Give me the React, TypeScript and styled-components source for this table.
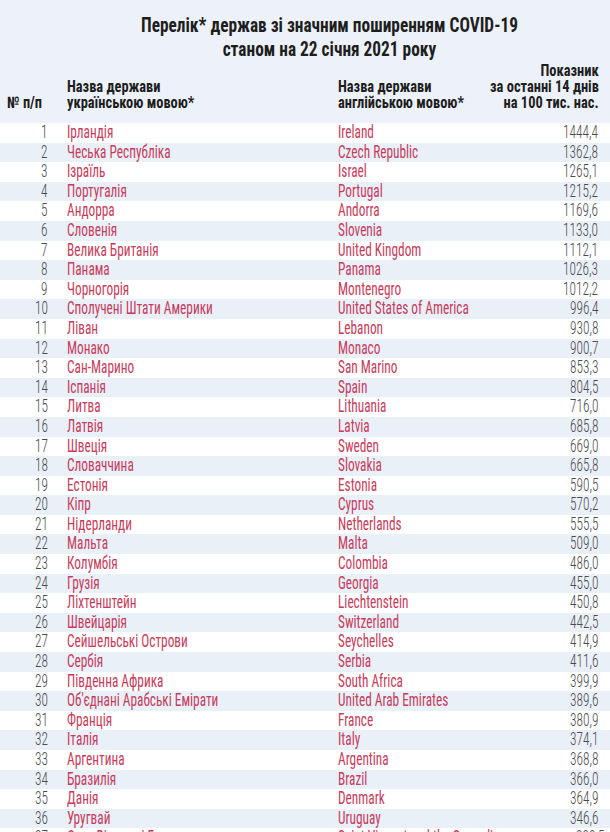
import React from "react";
import styled, { createGlobalStyle } from "styled-components";

const Global = createGlobalStyle`
  html, body { margin: 0; padding: 0; background: #ffffff; }
  body {
    font-family: "Roboto Condensed", "DejaVu Sans Condensed", "Liberation Sans Narrow", Roboto, sans-serif;
    font-stretch: condensed;
    overflow: hidden;
  }
`;

const Page = styled.div`
  width: 610px;
  height: 832px;
  overflow: hidden;
`;

const Head = styled.header`
  background: #edf2fa;
  padding: 13px 12px 12px 0;
`;

const Title = styled.h1`
  margin: 0;
  padding-left: 60px;
  text-align: center;
  font-size: 21px;
  line-height: 24px;
  font-weight: 700;
  color: #1e1e1e;
`;

const Narrow = styled.span<{ $scale: number; $origin?: "left" | "right" | "center" }>`
  display: inline-block;
  white-space: nowrap;
  transform: scaleX(${(p) => p.$scale});
  transform-origin: ${(p) => p.$origin ?? "left"} center;
`;

const Grid = styled.div`
  display: grid;
  grid-template-columns: 48px 290px 1fr auto;
  padding-right: 12px;
`;

const HeadRow = styled(Grid)`
  align-items: end;
  margin-top: 2px;
  font-size: 16px;
  line-height: 16px;
  font-weight: 700;
  color: #1e1e1e;
`;

const HCell = styled.div<{ $right?: boolean; $pad?: boolean }>`
  display: flex;
  flex-direction: column;
  align-items: ${(p) => (p.$right ? "flex-end" : "flex-start")};
  padding-left: ${(p) => (p.$pad ? "19px" : "0")};
`;

const NumHead = styled.div`
  padding-left: 7px;
  white-space: nowrap;
`;

const Row = styled(Grid)<{ $alt: boolean }>`
  height: 19.6px;
  align-items: center;
  background: ${(p) => (p.$alt ? "#eaf0f8" : "#ffffff")};
  font-size: 17.5px;
  line-height: 19.6px;
`;

const Num = styled.div`
  text-align: right;
  color: #4a4a4e;
  font-weight: 300;
`;

const Name = styled.div<{ $pad?: boolean }>`
  color: #c73c5c;
  padding-left: ${(p) => (p.$pad ? "19px" : "0")};
`;

const Val = styled.div`
  text-align: right;
  color: #4a4a4e;
  font-weight: 300;
`;

const data: [string, string, string][] = [
  ["Ірландія", "Ireland", "1444,4"],
  ["Чеська Республіка", "Czech Republic", "1362,8"],
  ["Ізраїль", "Israel", "1265,1"],
  ["Португалія", "Portugal", "1215,2"],
  ["Андорра", "Andorra", "1169,6"],
  ["Словенія", "Slovenia", "1133,0"],
  ["Велика Британія", "United Kingdom", "1112,1"],
  ["Панама", "Panama", "1026,3"],
  ["Чорногорія", "Montenegro", "1012,2"],
  ["Сполучені Штати Америки", "United States of America", "996,4"],
  ["Ліван", "Lebanon", "930,8"],
  ["Монако", "Monaco", "900,7"],
  ["Сан-Марино", "San Marino", "853,3"],
  ["Іспанія", "Spain", "804,5"],
  ["Литва", "Lithuania", "716,0"],
  ["Латвія", "Latvia", "685,8"],
  ["Швеція", "Sweden", "669,0"],
  ["Словаччина", "Slovakia", "665,8"],
  ["Естонія", "Estonia", "590,5"],
  ["Кіпр", "Cyprus", "570,2"],
  ["Нідерланди", "Netherlands", "555,5"],
  ["Мальта", "Malta", "509,0"],
  ["Колумбія", "Colombia", "486,0"],
  ["Грузія", "Georgia", "455,0"],
  ["Ліхтенштейн", "Liechtenstein", "450,8"],
  ["Швейцарія", "Switzerland", "442,5"],
  ["Сейшельські Острови", "Seychelles", "414,9"],
  ["Сербія", "Serbia", "411,6"],
  ["Південна Африка", "South Africa", "399,9"],
  ["Об'єднані Арабські Емірати", "United Arab Emirates", "389,6"],
  ["Франція", "France", "380,9"],
  ["Італія", "Italy", "374,1"],
  ["Аргентина", "Argentina", "368,8"],
  ["Бразилія", "Brazil", "366,0"],
  ["Данія", "Denmark", "364,9"],
  ["Уругвай", "Uruguay", "346,6"],
  ["Сент-Вінсент і Гренадини", "Saint Vincent and the Grenadines", "338,5"],
];

const RS = 0.76;
const HS = 0.9;
const TS = 0.825;

export default function App() {
  return (
    <Page>
      <Global />
      <Head>
        <Title>
          <Narrow $scale={TS} $origin="center">Перелік* держав зі значним поширенням COVID-19</Narrow>
          <br />
          <Narrow $scale={TS} $origin="center">станом на 22 січня 2021 року</Narrow>
        </Title>
        <HeadRow>
          <NumHead>
            <Narrow $scale={HS}>№ п/п</Narrow>
          </NumHead>
          <HCell $pad>
            <Narrow $scale={HS}>Назва держави</Narrow>
            <Narrow $scale={HS}>українською мовою*</Narrow>
          </HCell>
          <HCell>
            <Narrow $scale={HS}>Назва держави</Narrow>
            <Narrow $scale={HS}>англійською мовою*</Narrow>
          </HCell>
          <HCell $right>
            <Narrow $scale={HS} $origin="right">Показник</Narrow>
            <Narrow $scale={HS} $origin="right">за останні 14 днів</Narrow>
            <Narrow $scale={HS} $origin="right">на 100 тис. нас.</Narrow>
          </HCell>
        </HeadRow>
      </Head>
      {data.map(([ua, en, v], i) => (
        <Row key={i} $alt={i % 2 === 1}>
          <Num>
            <Narrow $scale={RS} $origin="right">{i + 1}</Narrow>
          </Num>
          <Name $pad>
            <Narrow $scale={RS}>{ua}</Narrow>
          </Name>
          <Name>
            <Narrow $scale={RS}>{en}</Narrow>
          </Name>
          <Val>
            <Narrow $scale={RS} $origin="right">{v}</Narrow>
          </Val>
        </Row>
      ))}
    </Page>
  );
}
